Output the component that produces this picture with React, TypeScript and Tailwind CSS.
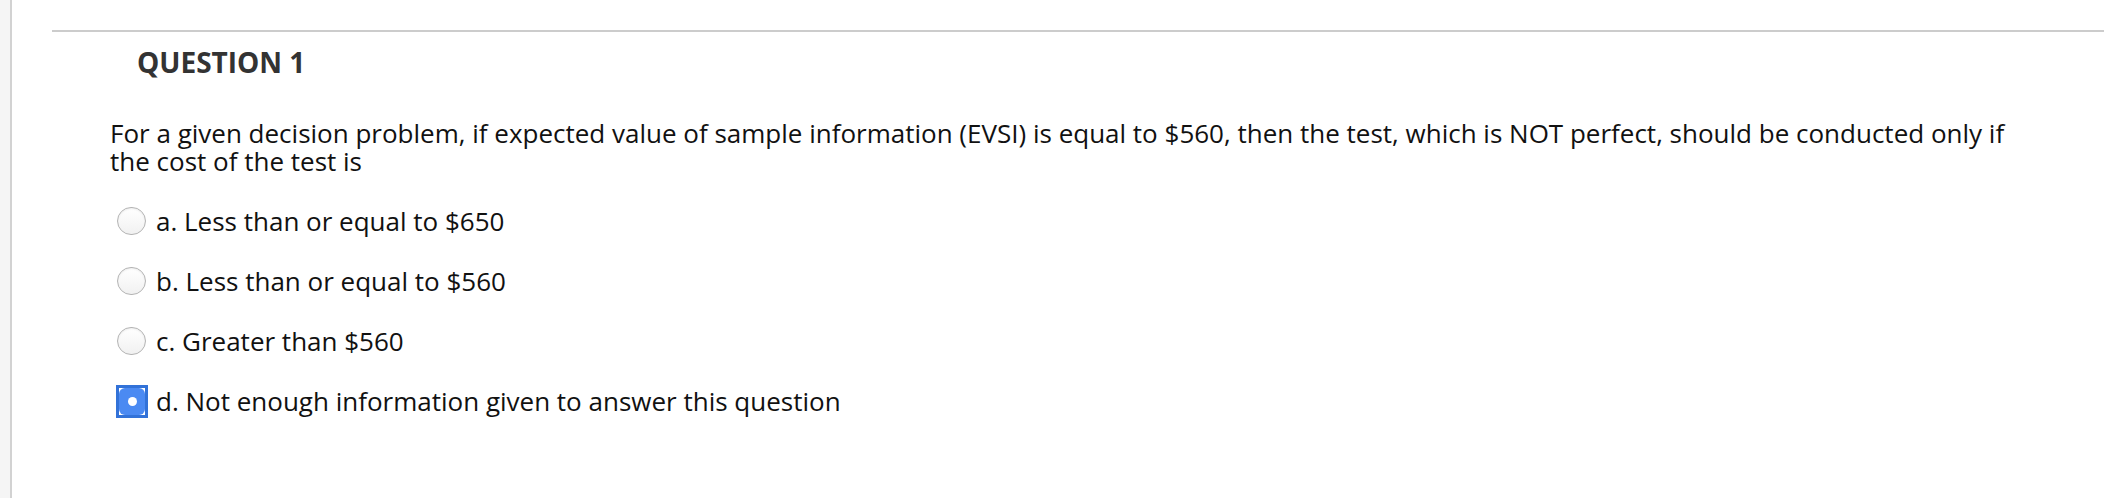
const OPTIONS = [
  { key: 'a', label: 'a. Less than or equal to $650', checked: false },
  { key: 'b', label: 'b. Less than or equal to $560', checked: false },
  { key: 'c', label: 'c. Greater than $560', checked: false },
  { key: 'd', label: 'd. Not enough information given to answer this question', checked: true },
]

function Radio({ checked }: { checked: boolean }) {
  if (checked) {
    return (
      <span className="flex h-[33px] w-[32px] shrink-0 items-center justify-center border-[3px] border-[#3272d8] bg-white">
        <span className="flex h-full w-full items-center justify-center rounded-[6px] bg-[#4b8af2]">
          <span className="h-[9px] w-[9px] rounded-full bg-white" />
        </span>
      </span>
    )
  }
  return (
    <span className="ml-[1px] mr-[2px] h-[28px] w-[29px] shrink-0 rounded-full border border-[#b4b4b4] bg-gradient-to-b from-white to-[#f1f1f1] shadow-[inset_0_1px_2px_rgba(0,0,0,0.08)]" />
  )
}

export default function App() {
  return (
    <div className="flex min-h-[498px] bg-white font-['Open_Sans',sans-serif]">
      {/* left rail */}
      <div className="w-[12px] shrink-0 border-r-2 border-[#d2d2d2] bg-[#f5f5f5]" />

      <div className="flex-1 pl-[40px] pt-[30px]">
        <div className="border-t-2 border-[#cccccc]">
          <h2 className="mt-[13px] pl-[85px] text-[28px] font-bold leading-[34px] text-[#333333]">
            QUESTION 1
          </h2>

          <div className="pl-[58px] pt-[40px]">
            <p className="text-[26px] leading-[28px] text-[#111111]">
              For a given decision problem, if expected value of sample information (EVSI) is equal to $560, then the test, which is NOT perfect, should be conducted only if
              <br />
              the cost of the test is
            </p>

            <ul className="mt-[16px]">
              {OPTIONS.map(opt => (
                <li key={opt.key} className="flex h-[60px] items-center">
                  <span className="ml-[6px] flex w-[40px] items-center">
                    <Radio checked={opt.checked} />
                  </span>
                  <span className="text-[26px] leading-[28px] text-[#111111]">{opt.label}</span>
                </li>
              ))}
            </ul>
          </div>
        </div>
      </div>
    </div>
  )
}
